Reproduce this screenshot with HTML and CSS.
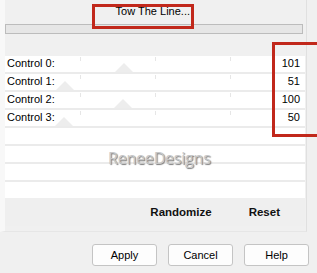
FILE: index.html
```html
<!DOCTYPE html>
<html lang="en">

<head>
  <meta charset="UTF-8">
  <meta name="viewport" content="width=device-width, initial-scale=1.0">
  <title>Tow The Line</title>
  <link rel="stylesheet" href="styles.css">
</head>

<body>
  <div class="frame">
    <!-- Filter name + progress -->
    <div class="top">
      <div class="caption">Tow The Line...</div>
      <div class="progress"></div>
    </div>

    <!-- Slider rows -->
    <div class="rows">
      <div class="row slider">
        <span class="label">Control 0:</span>
        <span class="thumb" style="left: 110px;"></span>
        <span class="value">101</span>
      </div>
      <div class="row slider">
        <span class="label">Control 1:</span>
        <span class="thumb" style="left: 51px;"></span>
        <span class="value">51</span>
      </div>
      <div class="row slider">
        <span class="label">Control 2:</span>
        <span class="thumb" style="left: 109px;"></span>
        <span class="value">100</span>
      </div>
      <div class="row slider">
        <span class="label">Control 3:</span>
        <span class="thumb" style="left: 50px;"></span>
        <span class="value">50</span>
      </div>
      <div class="row"></div>
      <div class="row"></div>
      <div class="row"></div>
      <div class="row"></div>
    </div>

    <div class="actions">
      <span>Randomize</span>
      <span>Reset</span>
    </div>

    <div class="watermark">ReneeDesigns</div>
  </div>

  <div class="buttons">
    <button class="btn">Apply</button>
    <button class="btn">Cancel</button>
    <button class="btn">Help</button>
  </div>

  <!-- red annotation boxes -->
  <div class="mark mark-title"></div>
  <div class="mark mark-values"></div>
</body>

</html>
```

FILE: styles.css
```css
* {
  margin: 0;
  padding: 0;
  box-sizing: border-box;
  font-family: 'Liberation Sans', Arial, sans-serif;
}

body {
  background-color: #f0f0f0;
  width: 317px;
  height: 273px;
  overflow: hidden;
  position: relative;
  font-size: 11px;
  color: #000;
}

.frame {
  position: relative;
  width: 307px;
  border-left: 5px solid #f8f8f8;
  border-right: 1px solid #e0e0e0;
  border-bottom: 1px solid #e6e6e6;
  padding-right: 1px;
  padding-bottom: 5px;
}

.top {
  height: 56px;
  padding-top: 5px;
}

.caption {
  width: 185px;
  line-height: 13px;
  text-align: right;
}

.progress {
  width: 298px;
  height: 10px;
  margin-top: 6px;
  background-color: #e6e6e6;
  border: 1px solid #bcbcbc;
}

.rows {
  background-color: #fff;
}

.row {
  position: relative;
  display: flex;
  justify-content: space-between;
  align-items: center;
  height: 18px;
  padding: 0 5px 2px 2px;
  border-bottom: 2px solid #ebebeb;
  line-height: 16px;
}

.row:last-child {
  height: 16px;
  border-bottom: none;
}

.slider {
  background:
    linear-gradient(#e6e6e6, #e6e6e6) 75px 1px / 1px 4px no-repeat,
    linear-gradient(#e6e6e6, #e6e6e6) 150px 1px / 1px 4px no-repeat,
    linear-gradient(#e6e6e6, #e6e6e6) 225px 1px / 1px 4px no-repeat;
}

.label,
.value {
  position: relative;
  z-index: 1;
}

.thumb {
  position: absolute;
  bottom: 0;
  width: 18px;
  height: 9px;
  background-color: #ededed;
  clip-path: polygon(50% 0, 100% 100%, 0 100%);
}

.actions {
  display: flex;
  justify-content: flex-end;
  align-items: center;
  gap: 37px;
  height: 28px;
  padding-right: 25px;
  background-color: #efefef;
  font-size: 11.5px;
  font-weight: bold;
  color: #111;
}

.watermark {
  position: absolute;
  left: 103px;
  top: 147px;
  font-family: 'Open Sans', sans-serif;
  font-size: 16px;
  color: #c8c8c8;
  text-shadow: 1px 1px 1px #777;
  letter-spacing: -0.2px;
}

.buttons {
  display: flex;
  justify-content: flex-end;
  gap: 11px;
  padding: 12px 8px 0 0;
}

.btn {
  width: 65px;
  height: 22px;
  background-color: #fdfdfd;
  border: 1px solid #c4c4c4;
  border-radius: 3px;
  font-size: 11px;
  color: #000;
}

.mark {
  position: absolute;
  border: 3px solid #c1281b;
}

.mark-title {
  left: 92px;
  top: 4px;
  width: 102px;
  height: 25px;
}

.mark-values {
  left: 272px;
  top: 42px;
  width: 60px;
  height: 95px;
}
```
